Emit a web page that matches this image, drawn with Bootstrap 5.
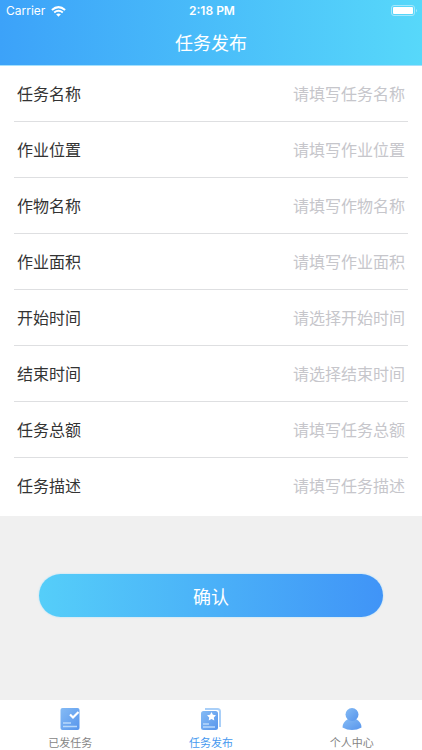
<!DOCTYPE html>
<html lang="zh-CN">
<head>
<meta charset="utf-8">
<meta name="viewport" content="width=device-width, initial-scale=1">
<title>任务发布</title>
<link href="https://cdn.jsdelivr.net/npm/bootstrap@5.3.0/dist/css/bootstrap.min.css" rel="stylesheet">
<style>
body { font-family: "Noto Sans CJK SC", sans-serif; background: #f0f0f0; color: #333; }
.app-top { background: linear-gradient(90deg, #3ca2f9, #57d8fa); color: #fff; border-bottom: 1px solid #a5e0fc; }
.status { font-family: Inter, sans-serif; font-size: 12px; line-height: 22px; padding: 0 4px 0 6px; }
.status > * { flex: 1 1 0; }
.status-net { gap: 6px; }
.status-time { font-weight: 600; }
.page-title { font-size: 18px; line-height: 27px; padding: 7px 0 9px; }
.task-fields { padding: 0 14px 2px; }
.field { height: 56px; padding: 0 3px 2px; border-bottom: 1px solid #dedfe1; font-size: 16px; line-height: 24px; }
.field:last-child { border-bottom-color: transparent; }
.field input { min-width: 0; height: 40px; color: #333; outline-offset: -2px; }
.field input::placeholder { color: #c6c6cb; opacity: 1; }
.confirm-area { padding: 58px 39px; }
.btn-confirm, .btn-confirm:hover, .btn-confirm:active { background: linear-gradient(90deg, #55cef9, #4094f7); color: #fff; border: 0; box-shadow: 0 0 2px #9edcff; }
.btn-confirm { font-size: 18px; line-height: 27px; padding: 9px 8px 7px; }
.tabs { background: #fff; height: 50px; padding-top: 7px; }
.tab { color: #858585; font-size: 11px; line-height: 16px; text-decoration: none; gap: 3px; }
.tab.active { color: #4699ef; }
</style>
</head>
<body class="d-flex flex-column min-vh-100">
<header class="app-top">
  <div class="status d-flex align-items-center">
    <div class="status-net d-flex align-items-center">
      <span>Carrier</span>
      <svg width="15" height="11" viewBox="0 0 15 11" fill="none" stroke="#fff" stroke-width="2" aria-hidden="true"><path d="M.9 4Q7.500-1.800 14.100 4M3.200 6.500q4.300-3.500 8.600 0"/><path d="M5.100 8.300q2.400-1.800 4.800 0L7.500 10.800Z" fill="#fff" stroke="none"/></svg>
    </div>
    <div class="status-time text-center">2:18 PM</div>
    <div class="d-flex justify-content-end">
      <svg width="27" height="12" viewBox="0 0 27 12" aria-hidden="true"><rect x=".5" y=".5" width="23" height="10" rx="2.5" fill="none" stroke="#a4e7fc"/><rect x="2" y="2" width="20" height="7" rx="1" fill="#fff"/><path d="M25 4q2 1.500 0 3.500Z" fill="#a4e7fc"/></svg>
    </div>
  </div>
  <h1 class="page-title text-center m-0 fw-normal">任务发布</h1>
</header>
<form class="flex-grow-1">
  <div class="task-fields bg-white">
    <div class="field d-flex align-items-center"><label for="name">任务名称</label><input id="name" class="flex-grow-1 border-0 bg-transparent text-end p-0" placeholder="请填写任务名称"></div>
    <div class="field d-flex align-items-center"><label for="place">作业位置</label><input id="place" class="flex-grow-1 border-0 bg-transparent text-end p-0" placeholder="请填写作业位置"></div>
    <div class="field d-flex align-items-center"><label for="crop">作物名称</label><input id="crop" class="flex-grow-1 border-0 bg-transparent text-end p-0" placeholder="请填写作物名称"></div>
    <div class="field d-flex align-items-center"><label for="area">作业面积</label><input id="area" class="flex-grow-1 border-0 bg-transparent text-end p-0" placeholder="请填写作业面积"></div>
    <div class="field d-flex align-items-center"><label for="start">开始时间</label><input id="start" class="flex-grow-1 border-0 bg-transparent text-end p-0" placeholder="请选择开始时间"></div>
    <div class="field d-flex align-items-center"><label for="end">结束时间</label><input id="end" class="flex-grow-1 border-0 bg-transparent text-end p-0" placeholder="请选择结束时间"></div>
    <div class="field d-flex align-items-center"><label for="total">任务总额</label><input id="total" class="flex-grow-1 border-0 bg-transparent text-end p-0" placeholder="请填写任务总额"></div>
    <div class="field d-flex align-items-center"><label for="desc">任务描述</label><input id="desc" class="flex-grow-1 border-0 bg-transparent text-end p-0" placeholder="请填写任务描述"></div>
  </div>
  <div class="confirm-area"><button type="button" class="btn btn-confirm rounded-pill w-100">确认</button></div>
</form>
<nav class="tabs d-flex sticky-bottom" aria-label="主导航">
  <a href="#sent" class="tab d-flex flex-column align-items-center flex-fill w-100">
    <svg width="24" height="24" viewBox="0 0 24 24" aria-hidden="true"><defs><linearGradient id="blue" x1="0" y1="0" x2="1" y2="1"><stop stop-color="#85bbf5"/><stop offset="1" stop-color="#5795ec"/></linearGradient></defs><rect x="2.500" y="1" width="19" height="22" rx="2" fill="url(#blue)"/><path d="m12 7.500 3 3 5.500-5.500" fill="none" stroke="#fff" stroke-width="2.200"/><path d="M5 16h8M5 19.500h14" stroke="#b9d9fb" stroke-width="1.500"/></svg>
    <span>已发任务</span>
  </a>
  <a href="#publish" class="tab active d-flex flex-column align-items-center flex-fill w-100" aria-current="page">
    <svg width="24" height="24" viewBox="0 0 24 24" aria-hidden="true"><path d="M6 2h12.500q2.500 0 2.500 2.500V20" fill="none" stroke="#a9cff8" stroke-width="2"/><rect x="2" y="4" width="17" height="19" rx="2.500" fill="url(#blue)"/><path d="m12.500 5 1.400 2.800 3.100.4-2.200 2.200.5 3.100-2.800-1.500-2.800 1.500.5-3.100L8 8.200l3.100-.4Z" fill="#fff"/><path d="M4 17h6M4 20h12" stroke="#b9d9fb" stroke-width="1.400"/></svg>
    <span>任务发布</span>
  </a>
  <a href="#me" class="tab d-flex flex-column align-items-center flex-fill w-100">
    <svg width="24" height="24" viewBox="0 0 24 24" aria-hidden="true"><path d="M8 12h8q5.500 3 5.500 8.500Q17 23 12 23t-9.500-2.500Q2.500 15 8 12Z" fill="url(#blue)"/><circle cx="12" cy="7.500" r="6.500" fill="url(#blue)"/></svg>
    <span>个人中心</span>
  </a>
</nav>
<script src="https://cdn.jsdelivr.net/npm/bootstrap@5.3.0/dist/js/bootstrap.bundle.min.js"></script>
</body>
</html>
